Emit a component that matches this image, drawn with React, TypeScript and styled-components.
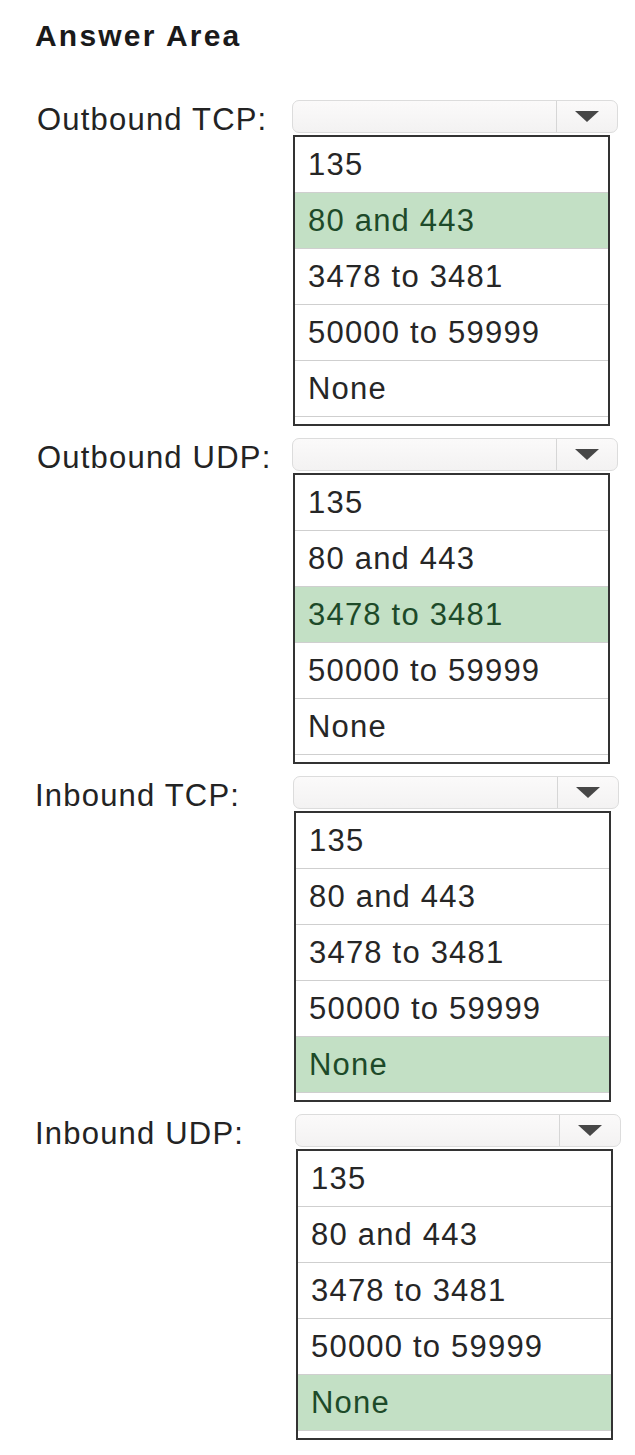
import styled, { createGlobalStyle } from "styled-components";

const GlobalStyle = createGlobalStyle`
    body {
        margin: 0;
        background: #ffffff;
        font-family: "Liberation Sans", Arial, sans-serif;
        color: #222222;
    }
`;

const Page = styled.div`
    padding: 18px 0 0 35px;
    width: 635px;
    box-sizing: border-box;
`;

const Title = styled.h1`
    margin: 0 0 46px 0;
    font-size: 30px;
    line-height: 36px;
    font-weight: bold;
    letter-spacing: 2.2px;
    color: #1a1a1a;
`;

const Section = styled.div`
    display: grid;
    grid-template-columns: 257px 330px;
    margin-bottom: 12px;
`;

const Label = styled.div<{ $indent: number }>`
    margin-top: 2px;
    padding-left: ${(p) => p.$indent}px;
    font-size: 31px;
    line-height: 36px;
    letter-spacing: 1.2px;
    color: #232323;
    white-space: nowrap;
`;

const Dropdown = styled.div<{ $shift: number }>`
    display: flex;
    flex-direction: column;
    margin-left: ${(p) => p.$shift}px;
`;

const SelectBox = styled.div`
    display: flex;
    width: 326px;
    height: 33px;
    box-sizing: border-box;
    border: 1px solid #dcdcdc;
    border-radius: 7px;
    background: linear-gradient(#fbfafa, #f3f2f2);
`;

const SelectValue = styled.div`
    flex: 1;
    border-right: 1px solid #d6d6d6;
`;

const ArrowButton = styled.div`
    width: 60px;
    display: flex;
    align-items: center;
    justify-content: center;
`;

const Arrow = styled.div`
    width: 0;
    height: 0;
    border-left: 12px solid transparent;
    border-right: 12px solid transparent;
    border-top: 11px solid #474747;
`;

const OptionList = styled.div`
    margin: 2px 0 0 1px;
    width: 317px;
    box-sizing: border-box;
    border: 2px solid #333333;
    padding-bottom: 7px;
    background: #ffffff;
`;

const Option = styled.div<{ $selected: boolean }>`
    height: 56px;
    box-sizing: border-box;
    padding: 1px 0 0 13px;
    line-height: 54px;
    font-size: 31px;
    letter-spacing: 1.2px;
    border-bottom: 1px solid #cfcfcf;
    background: ${(p) => (p.$selected ? "#c3e0c5" : "#ffffff")};
    color: ${(p) => (p.$selected ? "#1d4a29" : "#262626")};
`;

const options = ["135", "80 and 443", "3478 to 3481", "50000 to 59999", "None"];

const questions = [
    { label: "Outbound TCP:", answer: 1, indent: 2, shift: 0 },
    { label: "Outbound UDP:", answer: 2, indent: 2, shift: 0 },
    { label: "Inbound TCP:", answer: 4, indent: 0, shift: 1 },
    { label: "Inbound UDP:", answer: 4, indent: 0, shift: 3 },
];

function App() {
    return (
        <Page>
            <GlobalStyle />
            <Title>Answer Area</Title>
            {questions.map((q) => (
                <Section key={q.label}>
                    <Label $indent={q.indent}>{q.label}</Label>
                    <Dropdown $shift={q.shift}>
                        <SelectBox>
                            <SelectValue />
                            <ArrowButton>
                                <Arrow />
                            </ArrowButton>
                        </SelectBox>
                        <OptionList>
                            {options.map((o, i) => (
                                <Option key={o} $selected={i === q.answer}>
                                    {o}
                                </Option>
                            ))}
                        </OptionList>
                    </Dropdown>
                </Section>
            ))}
        </Page>
    );
}

export default App;
